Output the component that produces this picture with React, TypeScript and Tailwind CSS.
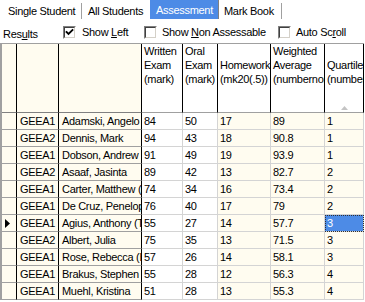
import React from "react";

const columns = [
  { w: "fixed", lines: [""] },
  { w: "fixed", lines: [""] },
  { w: "fixed", lines: [""] },
  { w: "data", lines: ["Written", "Exam", "(mark)"] },
  { w: "data", lines: ["Oral", "Exam", "(mark)"] },
  { w: "data", lines: ["", "Homework", "(mk20(.5))"] },
  { w: "data", lines: ["Weighted", "Average", "(numbernormal)"] },
  { w: "data", lines: ["", "Quartile", "(number)"] },
];

const rows = [
  ["GEEA1", "Adamski, Angelo", "84", "50", "17", "89", "1"],
  ["GEEA2", "Dennis, Mark", "94", "43", "18", "90.8", "1"],
  ["GEEA1", "Dobson, Andrew", "91", "49", "19", "93.9", "1"],
  ["GEEA2", "Asaaf, Jasinta", "89", "42", "13", "82.7", "2"],
  ["GEEA1", "Carter, Matthew (M", "74", "34", "16", "73.4", "2"],
  ["GEEA1", "De Cruz, Penelope", "76", "40", "17", "79", "2"],
  ["GEEA1", "Agius, Anthony (T", "55", "27", "14", "57.7", "3"],
  ["GEEA2", "Albert, Julia", "75", "35", "13", "71.5", "3"],
  ["GEEA1", "Rose, Rebecca (B", "57", "26", "14", "58.1", "3"],
  ["GEEA1", "Brakus, Stephen", "55", "28", "12", "56.3", "4"],
  ["GEEA1", "Muehl, Kristina", "51", "28", "13", "55.3", "4"],
];

// row index of the current record
const current = 6;

function Check({ checked }: { checked?: boolean }) {
  return (
    <span className="box-border flex h-[13px] w-[13px] shrink-0 border border-t-[#808080] border-l-[#808080] border-r-white border-b-white">
      <span className="box-border flex h-[11px] w-[11px] items-center justify-center border border-t-[#404040] border-l-[#404040] border-r-[#d4d0c8] border-b-[#d4d0c8] bg-white">
        {checked && (
          <svg width="9" height="9" viewBox="0 0 9 9">
            <path d="M1.5 4 L3.5 6 L7.5 2" fill="none" stroke="#000" strokeWidth="1.8" strokeLinecap="square" />
          </svg>
        )}
      </span>
    </span>
  );
}

function Sep() {
  return <div className="mt-[3px] h-[16px] w-px bg-[#a0a0a0]" />;
}

export default function App() {
  return (
    <div className="h-[302px] w-[365px] overflow-hidden bg-white font-['Liberation_Sans',Arial,sans-serif] text-[11px] leading-[13px] tracking-[-0.3px] text-black">
      {/* tabs */}
      <div className="flex h-[22px] items-start">
        <div className="h-[19px] w-[81px] pl-[8px] pt-[5px]">Single Student</div>
        <Sep />
        <div className="h-[19px] w-[68px] pl-[6px] pt-[5px]">All Students</div>
        <div className="box-border h-[19px] w-[69px] border-r border-[#808080] bg-[#4d8be6] pl-[6px] pt-[4px] text-white">
          Assessment
        </div>
        <div className="h-[19px] w-[62px] pl-[5px] pt-[5px]">Mark Book</div>
        <Sep />
      </div>

      {/* options */}
      <div className="flex h-[21px] items-center">
        <span className="mt-[4px] w-[63px] pl-[3px]">
          Res<span className="underline">u</span>lts
        </span>
        <div className="flex w-[81px] items-center gap-[6px]">
          <Check checked />
          <span>
            Show <span className="underline">L</span>eft
          </span>
        </div>
        <div className="flex w-[134px] items-center gap-[5px]">
          <Check />
          <span>
            Show <span className="underline">N</span>on Assessable
          </span>
        </div>
        <div className="flex items-center gap-[5px]">
          <Check />
          <span>
            Auto Sc<span className="underline">r</span>oll
          </span>
        </div>
      </div>

      {/* grid */}
      <div className="box-border grid w-[364px] grid-cols-[15px_42px_83px_41px_35px_53px_54px_39px] border-t border-l-2 border-[#a0a0a0]">
        {columns.map((c, i) => (
          <div
            key={i}
            className={
              "box-border flex h-[69px] flex-col overflow-hidden whitespace-nowrap border-r border-b border-r-black pl-[2px] leading-[14px] " +
              (c.w === "fixed" ? "border-b-[#808080] bg-[#fffcf0]" : "border-b-[#a0a0a0] bg-white")
            }
          >
            {c.lines.map((l, j) => (
              <div key={j} className="h-[14px]">
                {l}
              </div>
            ))}
            {i === 7 && (
              <div className="mt-auto mb-[2px] flex justify-center pr-[2px]">
                <svg width="7" height="4" viewBox="0 0 7 4">
                  <polygon points="3.5,0 7,4 0,4" fill="#c4c4c4" />
                </svg>
              </div>
            )}
          </div>
        ))}

        {rows.map((r, ri) => (
          <React.Fragment key={ri}>
            <div className="box-border flex h-[17px] items-center border-r border-b border-r-black border-b-[#a0a0a0] bg-[#fffcf0] pl-[3px]">
              {ri === current && (
                <svg width="5" height="9" viewBox="0 0 5 9">
                  <polygon points="0,0 5,4.5 0,9" fill="#000" />
                </svg>
              )}
            </div>
            {r.map((v, ci) => {
              const fixed = ci < 2;
              const cream = ci < 2 || ci > 3;
              const sel = ri === current && ci === 6;
              return (
                <div
                  key={ci}
                  className={
                    "box-border h-[17px] overflow-hidden whitespace-nowrap border-r border-b leading-[16px] " +
                    (fixed ? "border-r-black border-b-[#a0a0a0] pl-[3px] " : "border-r-[#d4d4d4] border-b-[#d4d4d4] pl-[2px] ") +
                    (sel
                      ? "bg-[#4d8be6] text-white outline-1 -outline-offset-1 outline-dotted outline-[#303030]"
                      : cream
                        ? "bg-[#fffcf0]"
                        : "bg-white")
                  }
                >
                  {v}
                </div>
              );
            })}
          </React.Fragment>
        ))}
      </div>
    </div>
  );
}
